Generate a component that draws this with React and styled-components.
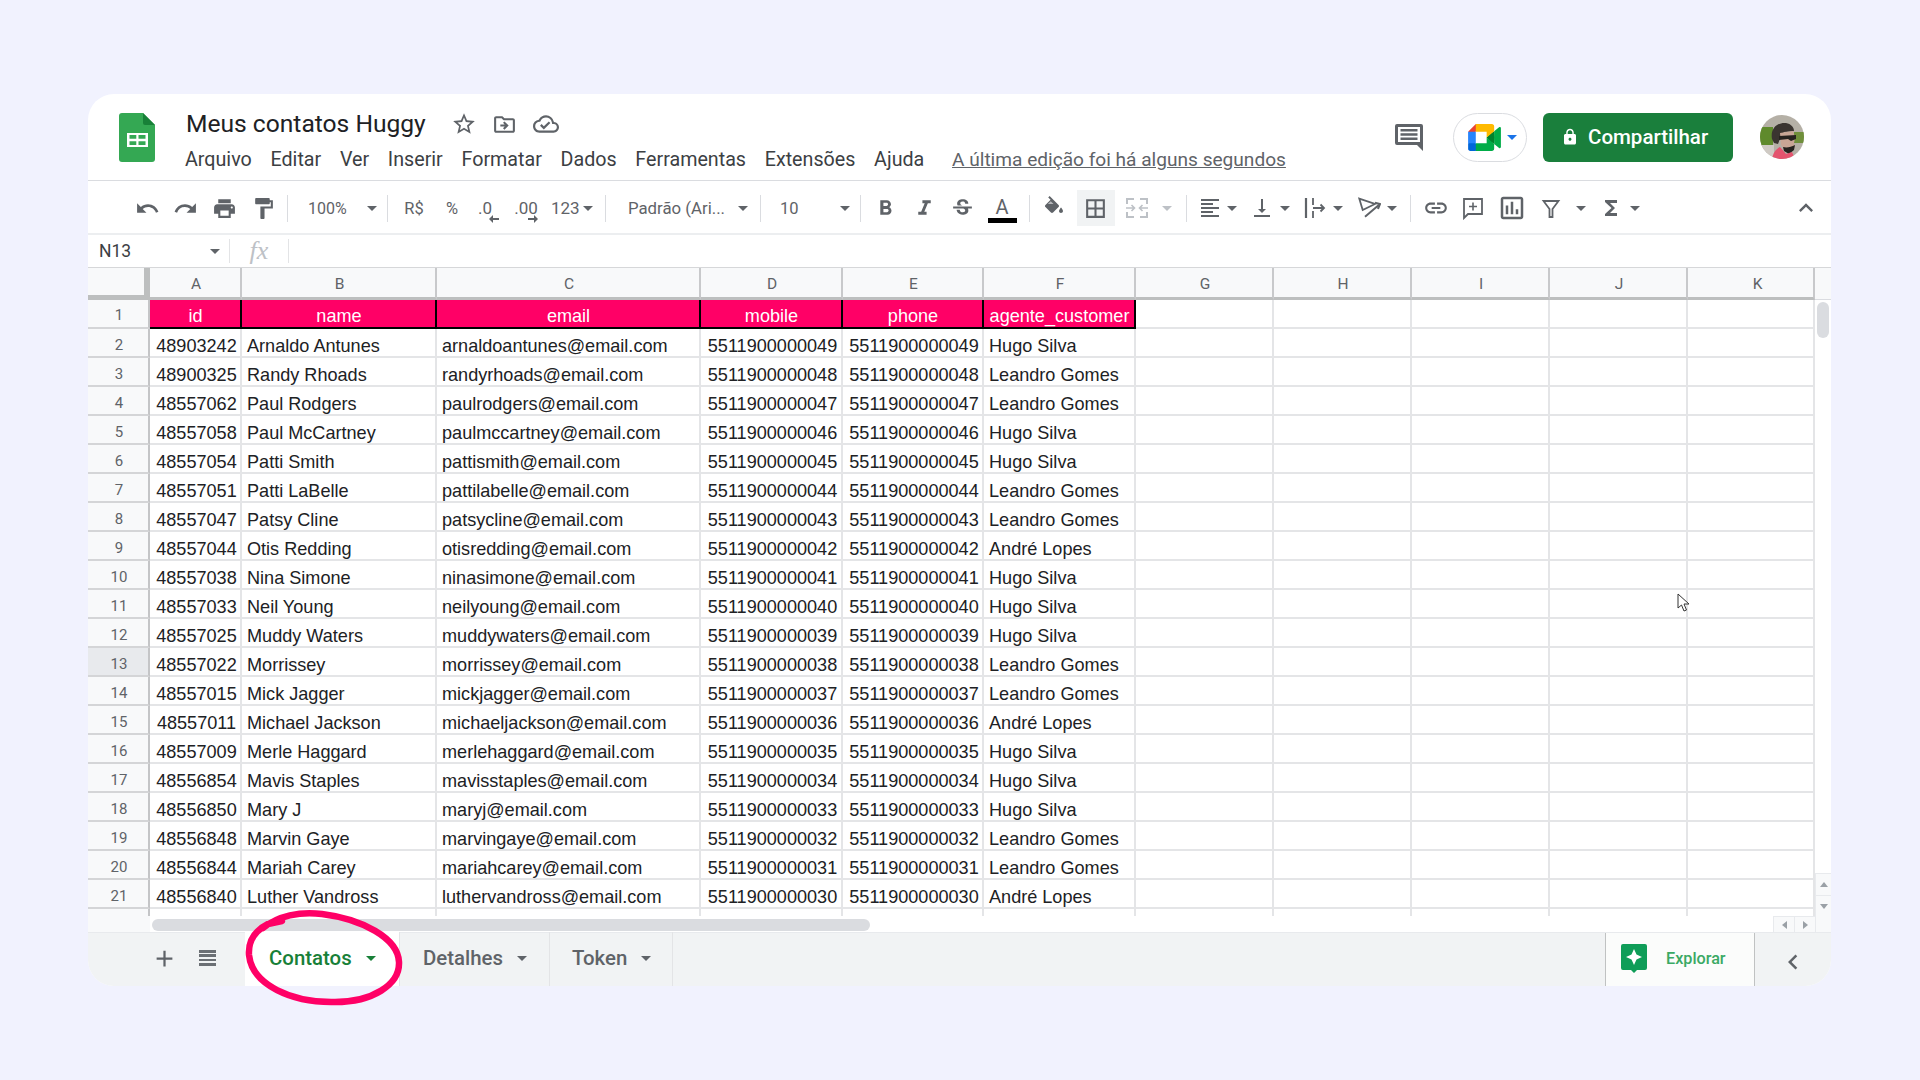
import React from 'react';
import styled, { createGlobalStyle } from 'styled-components';
import {
  MdUndo, MdRedo, MdPrint, MdFormatPaint, MdFormatBold, MdFormatItalic, MdStrikethroughS,
  MdBorderAll, MdFormatAlignLeft, MdVerticalAlignBottom, MdLink, MdFunctions,
  MdStarBorder, MdAdd, MdExpandLess, MdChevronLeft, MdLock,
  MdOutlineInsertChart, MdOutlineCloudDone, MdOutlineDriveFileMove,
} from 'react-icons/md';

const Global = createGlobalStyle`
  html, body { margin: 0; padding: 0; background: #f1f2fe; }
  body { font-family: Roboto, "Liberation Sans", sans-serif; overflow: hidden; }
  * { box-sizing: border-box; }
`;

const Page = styled.div`
  position: relative;
  width: 1920px;
  height: 1080px;
  padding: 94px 0 0 88px;
  background: #f1f2fe;
`;
const Card = styled.div`
  width: 1743px;
  height: 892px;
  background: #fff;
  border-radius: 26px;
  overflow: hidden;
  display: flex;
  flex-direction: column;
`;

/* ---------- header ---------- */
const Header = styled.header`
  height: 87px;
  flex: none;
  display: flex;
  align-items: center;
  padding: 0 27px 0 31px;
  border-bottom: 1px solid #dadce0;
`;
const Logo = styled.svg`
  width: 36px;
  height: 49px;
  flex: none;
`;
const TitleArea = styled.div`
  align-self: flex-start;
  margin: 15px 0 0 31px;
`;
const TitleRow = styled.div`
  height: 30px;
  display: flex;
  align-items: center;
`;
const Title = styled.div`
  font: 400 24.6px/30px Roboto, sans-serif;
  color: #202124;
  width: 257px;
`;
const TitleIcon = styled.span`
  width: ${p => p.$w || 41}px;
  display: flex;
  justify-content: center;
  color: #5f6368;
  font-size: ${p => p.$size || 24}px;
`;
const MenuRow = styled.nav`
  margin: 9px 0 0 -1px;
  height: 24px;
  display: flex;
  align-items: center;
  gap: 18.7px;
`;
const MenuItem = styled.span`
  font: 400 19.7px/24px Roboto, sans-serif;
  color: #3c4043;
`;
const LastEdit = styled.span`
  font: 400 19.1px/24px Roboto, sans-serif;
  color: #5f6368;
  text-decoration: underline;
  margin-left: 9px;
`;
const Right = styled.div`
  margin-left: auto;
  display: flex;
  align-items: center;
`;
const CommentGlyph = styled.svg`
  width: 28px;
  height: 27px;
  margin-right: 30px;
`;
const MeetPill = styled.div`
  width: 74px;
  height: 49px;
  border: 1px solid #dadce0;
  border-radius: 25px;
  display: flex;
  align-items: center;
  padding-left: 14px;
  margin-right: 16px;
`;
const MeetCaret = styled.span`
  margin-left: 6px;
  border-left: 5px solid transparent;
  border-right: 5px solid transparent;
  border-top: 5px solid #1a73e8;
`;
const ShareButton = styled.button`
  width: 190px;
  height: 49px;
  border: 0;
  border-radius: 6px;
  background: #1a7f3c;
  color: #fff;
  font: 500 20.5px Roboto, sans-serif;
  display: flex;
  align-items: center;
  padding: 0 0 0 18px;
  gap: 9px;
  margin-right: 27px;
`;
const Avatar = styled.svg`
  width: 44px;
  height: 44px;
  border-radius: 50%;
`;

/* ---------- toolbar ---------- */
const Toolbar = styled.div`
  height: 54px;
  flex: none;
  display: flex;
  align-items: center;
  padding: 2px 0 0 40px;
  border-bottom: 2px solid #eceef0;
`;
const Tool = styled.div`
  width: ${p => p.$w}px;
  height: 36px;
  flex: none;
  display: flex;
  align-items: center;
  justify-content: center;
  padding-right: ${p => p.$pr || 0}px;
  color: ${p => (p.$off ? '#bdc1c6' : '#5f6368')};
  font-size: ${p => p.$size || 25}px;
  background: ${p => (p.$on ? '#f1f3f4' : 'transparent')};
`;
const ToolGroup = styled.div`
  width: ${p => p.$w}px;
  height: 35px;
  flex: none;
  display: flex;
  align-items: center;
  padding-left: ${p => p.$pl}px;
  gap: ${p => p.$gap}px;
  color: ${p => (p.$off ? '#bdc1c6' : '#5f6368')};
  font-size: 24px;
`;
const ToolText = styled.span`
  font: 400 ${p => p.$size || 16.5}px Roboto, sans-serif;
  color: #5f6368;
  white-space: nowrap;
`;
const Caret = styled.span`
  flex: none;
  width: 0;
  height: 0;
  border-left: 5px solid transparent;
  border-right: 5px solid transparent;
  border-top: 5px solid ${p => p.$color || '#5f6368'};
  margin-left: ${p => p.$ml || 0}px;
`;
const Sep = styled.div`
  width: ${p => p.$w}px;
  height: 27px;
  flex: none;
  display: flex;
  justify-content: center;
  &::before { content: ''; width: 1px; background: #dadce0; }
`;
const Decimal = styled.span`
  position: relative;
  font: 400 17px/20px Roboto, sans-serif;
  color: #5f6368;
  display: inline-block;
`;
const DecimalArrow = styled.svg`
  position: absolute;
  left: ${p => p.$left}px;
  top: 16px;
  width: 12px;
  height: 10px;
`;
const TextColor = styled.span`
  width: 30px;
  display: flex;
  flex-direction: column;
  align-items: center;
  font: 400 20px/20px Roboto, sans-serif;
  color: #5f6368;
  margin-top: 4px;
`;
const ColorBar = styled.span`
  width: 29px;
  height: 5px;
  margin-top: 1px;
  background: #000;
`;
const Collapse = styled.span`
  margin-left: auto;
  margin-right: 11px;
  color: #5f6368;
  font-size: 28px;
  display: flex;
`;

/* ---------- formula bar ---------- */
const FormulaBar = styled.div`
  height: 32px;
  flex: none;
  display: flex;
  align-items: center;
`;
const NameBox = styled.div`
  width: 141px;
  padding: 0 9px 0 11px;
  display: flex;
  align-items: center;
  justify-content: space-between;
  font: 400 17.5px Roboto, sans-serif;
  color: #3c4043;
`;
const FxSep = styled.span`
  width: 1px;
  height: 24px;
  background: #e3e4e6;
`;
const Fx = styled.span`
  width: 58px;
  text-align: center;
  font: italic 400 26px "Liberation Serif", serif;
  color: #bdc1c6;
`;

/* ---------- grid ---------- */
const GridArea = styled.div`
  height: 649px;
  flex: none;
  display: flex;
  border-top: 1px solid #d6d7d9;
`;
const Grid = styled.div`
  width: 1727px;
  flex: none;
  overflow: hidden;
  display: grid;
  grid-template-columns: 62px 92px 195px 264px 142px 141px 152px 138px 138px 138px 138px 127px;
  grid-template-rows: 32px repeat(22, 29px);
`;
const Corner = styled.div`
  background: #f8f9fa;
  border-right: 6px solid #bdbfbf;
  border-bottom: 5px solid #bdbfbf;
`;
const ColHead = styled.div`
  background: #f8f9fa;
  border-right: 2px solid #c8c9cb;
  border-bottom: 3px solid #bdbfbf;
  padding-left: ${p => p.$pl || 2}px;
  font: 400 15.5px/33px Roboto, sans-serif;
  color: #5f6368;
  text-align: center;
`;
const RowHead = styled.div`
  background: ${p => (p.$active ? '#e8eaed' : '#f8f9fa')};
  border-right: 2px solid #c4c5c7;
  border-bottom: 2px solid #d4d5d7;
  padding-left: 2px;
  font: 400 15px/${p => p.$lh || 32}px Roboto, sans-serif;
  color: #5f6368;
  text-align: center;
`;
const Cell = styled.div`
  border-right: 2px solid #e4e5e7;
  border-bottom: 2px solid #e4e5e7;
  padding: 0 ${p => (p.$center ? 0 : 4)}px 0 ${p => (p.$center ? 3 : 5)}px;
  font: 400 18.1px/34px "Liberation Sans", Arial, sans-serif;
  color: #202124;
  text-align: ${p => (p.$center ? 'center' : 'left')};
  white-space: nowrap;
  overflow: hidden;
`;
const HeadCell = styled.div`
  background: #ff0066;
  border-right: 2px solid #000;
  border-bottom: 2px solid #000;
  padding-left: 1px;
  font: 400 18.1px/32px "Liberation Sans", Arial, sans-serif;
  color: #fff;
  text-align: center;
`;
const VScroll = styled.div`
  width: 16px;
  flex: none;
  display: flex;
  flex-direction: column;
`;
const VHead = styled.div`
  height: 32px;
  flex: none;
  background: #f8f9fa;
  border-bottom: 1px solid #dadce0;
`;
const VThumb = styled.div`
  width: 12px;
  height: 36px;
  flex: none;
  margin: 2px 0 0 2px;
  border-radius: 6px;
  background: #dadce0;
`;
const VGap = styled.div`
  flex: 1;
`;
const ScrollBtn = styled.div`
  flex: none;
  height: ${p => p.$h || 21}px;
  width: ${p => p.$w || 16}px;
  background: #f8f9fa;
  border-top: 1px solid #e8eaed;
  border-left: 1px solid #e8eaed;
  display: flex;
  align-items: center;
  justify-content: center;
`;
const TriUp = styled.span`
  border-left: 4px solid transparent;
  border-right: 4px solid transparent;
  border-bottom: 5px solid #9aa0a6;
`;
const TriDown = styled.span`
  border-left: 4px solid transparent;
  border-right: 4px solid transparent;
  border-top: 5px solid #9aa0a6;
`;
const TriLeft = styled.span`
  border-top: 4px solid transparent;
  border-bottom: 4px solid transparent;
  border-right: 5px solid #9aa0a6;
`;
const TriRight = styled.span`
  border-top: 4px solid transparent;
  border-bottom: 4px solid transparent;
  border-left: 5px solid #9aa0a6;
`;
const HScroll = styled.div`
  height: 16px;
  flex: none;
  display: flex;
  align-items: stretch;
`;
const HGutter = styled.div`
  width: 62px;
  flex: none;
  background: #f8f9fa;
`;
const HTrack = styled.div`
  flex: 1;
  padding: 3px 0 1px 2px;
`;
const HThumb = styled.div`
  width: 718px;
  height: 12px;
  border-radius: 6px;
  background: #dadce0;
`;
const HCorner = styled.div`
  width: 16px;
  flex: none;
  background: #f8f9fa;
  border-left: 1px solid #e8eaed;
`;

/* ---------- sheet tabs ---------- */
const TabBar = styled.div`
  flex: 1;
  display: flex;
  align-items: stretch;
  background: #f1f3f4;
  border-top: 1px solid #e8eaed;
  padding-left: 43px;
`;
const TabTool = styled.span`
  flex: none;
  width: ${p => p.$w}px;
  display: flex;
  align-items: center;
  justify-content: center;
  color: #5f6368;
  font-size: 27px;
  padding-bottom: 3px;
`;
const ListGlyph = styled.span`
  width: 17px;
  height: 16px;
  background: repeating-linear-gradient(to bottom, #6b6f74 0 2.500px, transparent 2.500px 4.400px);
`;
const SheetTab = styled.div`
  flex: none;
  width: ${p => p.$w}px;
  display: flex;
  align-items: center;
  padding: 0 0 2px ${p => p.$pl}px;
  gap: 14px;
  margin-top: -1px;
  background: ${p => (p.$active ? '#fff' : 'transparent')};
  border-right: 1px solid #e3e4e6;
  font: 500 20.4px Roboto, sans-serif;
  color: ${p => (p.$active ? '#188038' : '#5f6368')};
`;
const Spacer = styled.div`
  flex: 1;
`;
const Explore = styled.div`
  width: 150px;
  flex: none;
  background: #fbfcfb;
  border-left: 1px solid #c0c2c2;
  border-right: 1px solid #c0c2c2;
  display: flex;
  align-items: center;
  padding: 0 0 2px 15px;
  gap: 19px;
  font: 500 16.2px Roboto, sans-serif;
  color: #3aa964;
`;
const ExploreIcon = styled.svg`
  width: 26px;
  height: 29px;
`;
const SideToggle = styled.span`
  width: 76px;
  flex: none;
  display: flex;
  align-items: center;
  justify-content: center;
  color: #5f6368;
  font-size: 30px;
  padding-top: 5px;
`;

/* ---------- overlays ---------- */
const Circle = styled.svg`
  position: absolute;
  left: 240px;
  top: 900px;
  width: 175px;
  height: 115px;
  pointer-events: none;
`;
const Pointer = styled.svg`
  position: absolute;
  left: 1677px;
  top: 593px;
  width: 14px;
  height: 20px;
`;

const columns = ['A', 'B', 'C', 'D', 'E', 'F', 'G', 'H', 'I', 'J', 'K'];
const heads = ['id', 'name', 'email', 'mobile', 'phone', 'agente_customer'];
const H = 'Hugo Silva', L = 'Leandro Gomes', A = 'André Lopes';
const rows = [
  ['48903242', 'Arnaldo Antunes', 'arnaldoantunes@email.com', '5511900000049', '5511900000049', H],
  ['48900325', 'Randy Rhoads', 'randyrhoads@email.com', '5511900000048', '5511900000048', L],
  ['48557062', 'Paul Rodgers', 'paulrodgers@email.com', '5511900000047', '5511900000047', L],
  ['48557058', 'Paul McCartney', 'paulmccartney@email.com', '5511900000046', '5511900000046', H],
  ['48557054', 'Patti Smith', 'pattismith@email.com', '5511900000045', '5511900000045', H],
  ['48557051', 'Patti LaBelle', 'pattilabelle@email.com', '5511900000044', '5511900000044', L],
  ['48557047', 'Patsy Cline', 'patsycline@email.com', '5511900000043', '5511900000043', L],
  ['48557044', 'Otis Redding', 'otisredding@email.com', '5511900000042', '5511900000042', A],
  ['48557038', 'Nina Simone', 'ninasimone@email.com', '5511900000041', '5511900000041', H],
  ['48557033', 'Neil Young', 'neilyoung@email.com', '5511900000040', '5511900000040', H],
  ['48557025', 'Muddy Waters', 'muddywaters@email.com', '5511900000039', '5511900000039', H],
  ['48557022', 'Morrissey', 'morrissey@email.com', '5511900000038', '5511900000038', L],
  ['48557015', 'Mick Jagger', 'mickjagger@email.com', '5511900000037', '5511900000037', L],
  ['48557011', 'Michael Jackson', 'michaeljackson@email.com', '5511900000036', '5511900000036', A],
  ['48557009', 'Merle Haggard', 'merlehaggard@email.com', '5511900000035', '5511900000035', H],
  ['48556854', 'Mavis Staples', 'mavisstaples@email.com', '5511900000034', '5511900000034', H],
  ['48556850', 'Mary J', 'maryj@email.com', '5511900000033', '5511900000033', H],
  ['48556848', 'Marvin Gaye', 'marvingaye@email.com', '5511900000032', '5511900000032', L],
  ['48556844', 'Mariah Carey', 'mariahcarey@email.com', '5511900000031', '5511900000031', L],
  ['48556840', 'Luther Vandross', 'luthervandross@email.com', '5511900000030', '5511900000030', A],
  ['', '', '', '', '', ''],
];
const centered = [true, false, false, true, true, false];

const Glyph = ({ children }) => (
  <svg width="24" height="24" viewBox="0 0 24 24" fill="none" stroke="currentColor" strokeWidth="2">{children}</svg>
);

export default function App() {
  return (
    <Page>
      <Global />
      <Card>
        <Header>
          <Logo viewBox="0 0 36 49">
            <path fill="#34a853" d="M3 0h21l12 12v34a3 3 0 0 1-3 3H3a3 3 0 0 1-3-3V3a3 3 0 0 1 3-3z" />
            <path fill="#188038" d="M24 0l12 12H26a2 2 0 0 1-2-2z" />
            <path fill="#fff" fillRule="evenodd" d="M8 20h21v14H8zM10.500 22v3.800h6.800V22zm9 0v3.800h7V22zm-9 6.200V32h6.800v-3.800zm9 0V32h7v-3.800z" />
          </Logo>
          <TitleArea>
            <TitleRow>
              <Title>Meus contatos Huggy</Title>
              <TitleIcon $size={26}><MdStarBorder /></TitleIcon>
              <TitleIcon $size={25}><MdOutlineDriveFileMove /></TitleIcon>
              <TitleIcon $size={26}><MdOutlineCloudDone /></TitleIcon>
            </TitleRow>
            <MenuRow>
              {['Arquivo', 'Editar', 'Ver', 'Inserir', 'Formatar', 'Dados', 'Ferramentas', 'Extensões', 'Ajuda'].map(m => (
                <MenuItem key={m}>{m}</MenuItem>
              ))}
              <LastEdit>A última edição foi há alguns segundos</LastEdit>
            </MenuRow>
          </TitleArea>
          <Right>
            <CommentGlyph viewBox="0 0 28 27">
              <path fill="#5f6368" fillRule="evenodd" d="M2 0h24a2 2 0 0 1 2 2v25l-6-6H2a2 2 0 0 1-2-2V2a2 2 0 0 1 2-2zm1 3v15h22V3z" />
              <path fill="#5f6368" d="M5.500 5h17v2.500h-17zM5.500 9.300h17v2.500h-17zM5.500 13.500h17V16h-17z" />
            </CommentGlyph>
            <MeetPill>
              <svg width="33" height="27" viewBox="0 0 87.500 72">
                <path fill="#00832d" d="M49.500 36l8.530 9.750 11.470 7.330 2-17.020-2-16.640-11.690 6.440z" />
                <path fill="#0066da" d="M0 51.500V66c0 3.315 2.685 6 6 6h14.500l3-10.960-3-9.540-9.950-3z" />
                <path fill="#e94235" d="M20.500 0L0 20.500l10.550 3 9.950-3 2.950-9.410z" />
                <path fill="#2684fc" d="M20.500 20.500H0v31h20.500z" />
                <path fill="#00ac47" d="M82.600 8.680L69.500 19.420v33.660l13.160 10.790c1.970 1.540 4.850.135 4.850-2.370V11c0-2.535-2.945-3.925-4.910-2.320zM49.500 36v15.500h-29V72h43c3.315 0 6-2.685 6-6V53.080z" />
                <path fill="#ffba00" d="M63.500 0h-43v20.500h29V36l20-16.570V6c0-3.315-2.685-6-6-6z" />
              </svg>
              <MeetCaret />
            </MeetPill>
            <ShareButton><MdLock size={18} />Compartilhar</ShareButton>
            <Avatar viewBox="0 0 44 44">
              <rect width="44" height="44" fill="#b5b0a6" />
              <rect x="0" y="12" width="13" height="18" fill="#5f8a2c" />
              <rect x="34" y="17" width="10" height="11" fill="#6f8f3a" />
              <rect x="0" y="30" width="14" height="14" fill="#cfcac4" />
              <path fill="#3a3430" d="M12 24c-2-11 6-17 14-16 5 1 8 4 8 8l-10 1-3 4-3 8-4-1z" />
              <path fill="#c8a595" d="M20 18l13-2c2 5 2 9 1 12l1 5-9 3-5-6z" />
              <path fill="#26221f" d="M19 21l17-1v4l-5 2-3-2-9 1zM23 32c4 1 8 0 12-2l-1 5-5 4-5-3z" />
              <path fill="#e4536e" d="M12 44c1-6 4-10 8-12l6 7 6-2 3 7z" />
            </Avatar>
          </Right>
        </Header>

        <Toolbar>
          <Tool $w={38}><MdUndo /></Tool>
          <Tool $w={39}><MdRedo /></Tool>
          <Tool $w={38}><MdPrint /></Tool>
          <Tool $w={40}><MdFormatPaint /></Tool>
          <Sep $w={9} />
          <ToolGroup $w={90} $pl={16} $gap={20}><ToolText $size={16}>100%</ToolText><Caret /></ToolGroup>
          <Sep $w={11} />
          <Tool $w={42}><ToolText>R$</ToolText></Tool>
          <Tool $w={34}><ToolText>%</ToolText></Tool>
          <Tool $w={38} $pr={6}>
            <Decimal>.0<DecimalArrow $left={10} viewBox="0 0 12 10"><path fill="#5f6368" d="M5 1L1 5l4 4V6h6V4H5z" /></DecimalArrow></Decimal>
          </Tool>
          <Tool $w={42} $pr={4}>
            <Decimal>.00<DecimalArrow $left={13} viewBox="0 0 12 10"><path fill="#5f6368" d="M7 1l4 4-4 4V6H1V4h6z" /></DecimalArrow></Decimal>
          </Tool>
          <ToolGroup $w={49} $pl={2} $gap={3}><ToolText $size={17}>123</ToolText><Caret /></ToolGroup>
          <Sep $w={14} />
          <ToolGroup $w={140} $pl={16} $gap={13}><ToolText $size={16.8}>Padrão (Ari...</ToolText><Caret /></ToolGroup>
          <Sep $w={16} />
          <ToolGroup $w={86} $pl={12} $gap={41}><ToolText>10</ToolText><Caret /></ToolGroup>
          <Sep $w={12} />
          <Tool $w={38}><MdFormatBold /></Tool>
          <Tool $w={40}><MdFormatItalic /></Tool>
          <Tool $w={36}><MdStrikethroughS /></Tool>
          <Tool $w={44}><TextColor>A<ColorBar /></TextColor></Tool>
          <Sep $w={10} />
          <Tool $w={43} $pr={4}>
            <svg width="24" height="24" viewBox="0 0 24 24">
              <path fill="currentColor" d="M16.560 8.940L7.620 0 6.210 1.410l2.380 2.380-5.150 5.150c-.59.59-.59 1.540 0 2.120l5.500 5.500c.59.59 1.530.59 2.120 0l5.500-5.500c.59-.58.59-1.530 0-2.120zM19 11.500s-2 2.170-2 3.500c0 1.100.9 2 2 2s2-.9 2-2c0-1.330-2-3.500-2-3.500z" />
              <path fill="#fff" opacity=".55" d="M8.700 5.200L5.800 8.100h5.800z" />
            </svg>
          </Tool>
          <Tool $w={38} $on $pr={2}><MdBorderAll /></Tool>
          <ToolGroup $w={63} $pl={10} $gap={13} $off>
            <Glyph>
              <path d="M2 8V3h7M15 3h7v5M2 16v5h7M15 21h7v-5" />
              <path strokeWidth="1.600" d="M1 12h8M6.500 9L9.500 12l-3 3M23 12h-8M17.500 9L14.500 12l3 3" />
            </Glyph>
            <Caret $color="#bdc1c6" />
          </ToolGroup>
          <Sep $w={16} />
          <ToolGroup $w={49} $pl={4} $gap={5}><MdFormatAlignLeft /><Caret /></ToolGroup>
          <ToolGroup $w={53} $pl={7} $gap={6}><MdVerticalAlignBottom /><Caret /></ToolGroup>
          <ToolGroup $w={53} $pl={7} $gap={6}>
            <Glyph>
              <path d="M3 2v20" strokeWidth="2.200" />
              <path strokeWidth="1.800" d="M10 2v7M10 15v7M10 12h11M17.500 8.500L21 12l-3.500 3.500" />
            </Glyph>
            <Caret />
          </ToolGroup>
          <ToolGroup $w={53} $pl={8} $gap={6}>
            <Glyph>
              <path strokeWidth="1.800" d="M2.300 2.700L18 8 5.700 14z" />
              <path strokeWidth="2" d="M23 8L8 20.700M18 6.700L23 8l-2 5" />
            </Glyph>
            <Caret />
          </ToolGroup>
          <Sep $w={16} />
          <Tool $w={36} $size={26}><MdLink /></Tool>
          <Tool $w={38}>
            <Glyph>
              <path d="M3 3h18v15H7l-4 4z" strokeWidth="1.800" />
              <path d="M12 6.500v8M8 10.500h8" strokeWidth="1.600" />
            </Glyph>
          </Tool>
          <Tool $w={40} $size={30}><MdOutlineInsertChart /></Tool>
          <ToolGroup $w={58} $pl={7} $gap={13}>
            <Glyph><path strokeWidth="1.800" d="M4.500 5h15l-6 8v8h-3v-8z" /></Glyph>
            <Caret />
          </ToolGroup>
          <ToolGroup $w={55} $pl={9} $gap={7}><MdFunctions /><Caret /></ToolGroup>
          <Collapse><MdExpandLess /></Collapse>
        </Toolbar>

        <FormulaBar>
          <NameBox>N13<Caret /></NameBox>
          <FxSep />
          <Fx>fx</Fx>
          <FxSep />
        </FormulaBar>

        <GridArea>
          <Grid>
            <Corner />
            {columns.map(c => <ColHead key={c} $pl={c === 'K' ? 14 : 2}>{c}</ColHead>)}
            <RowHead $lh={30}>1</RowHead>
            {heads.map(h => <HeadCell key={h}>{h}</HeadCell>)}
            {columns.slice(6).map(c => <Cell key={c} />)}
            {rows.map((r, i) => (
              <React.Fragment key={i}>
                <RowHead $active={i + 2 === 13}>{i + 2 === 22 ? '' : i + 2}</RowHead>
                {r.map((v, j) => <Cell key={j} $center={centered[j]}>{v}</Cell>)}
                {columns.slice(6).map(c => <Cell key={c} />)}
              </React.Fragment>
            ))}
          </Grid>
          <VScroll>
            <VHead />
            <VThumb />
            <VGap />
            <ScrollBtn $h={22}><TriUp /></ScrollBtn>
            <ScrollBtn $h={21}><TriDown /></ScrollBtn>
          </VScroll>
        </GridArea>
        <HScroll>
          <HGutter />
          <HTrack><HThumb /></HTrack>
          <ScrollBtn $w={21} $h={16}><TriLeft /></ScrollBtn>
          <ScrollBtn $w={21} $h={16}><TriRight /></ScrollBtn>
          <HCorner />
        </HScroll>

        <TabBar>
          <TabTool $w={66}><MdAdd /></TabTool>
          <TabTool $w={20}><ListGlyph /></TabTool>
          <TabTool $w={28} />
          <SheetTab $active $w={155} $pl={24}>Contatos<Caret $color="#188038" /></SheetTab>
          <SheetTab $w={150} $pl={23}>Detalhes<Caret /></SheetTab>
          <SheetTab $w={123} $pl={22}>Token<Caret /></SheetTab>
          <Spacer />
          <Explore>
            <ExploreIcon viewBox="0 0 26 29">
              <path fill="#0f9d58" d="M2 0h22a2 2 0 0 1 2 2v22a2 2 0 0 1-2 2h-8l-3 3-3-3H2a2 2 0 0 1-2-2V2a2 2 0 0 1 2-2z" />
              <path fill="#fff" d="M13 5l2.500 5.500L21 13l-5.500 2.500L13 21l-2.500-5.500L5 13l5.500-2.500z" />
            </ExploreIcon>
            Explorar
          </Explore>
          <SideToggle><MdChevronLeft /></SideToggle>
        </TabBar>
      </Card>

      <Circle viewBox="240 900 175 115" fill="none" stroke="#ff0066" strokeWidth="6.500" strokeLinecap="round">
        <path d="M263 928C278 916 300 911 322 914C362 919 398 938 399 962C400 985 372 1002 335 1002C292 1003 252 985 249 955C248 940 256 930 268 924L282 921" />
      </Circle>
      <Pointer viewBox="0 0 14 20">
        <path fill="#fff" stroke="#333" strokeWidth="1" d="M1 1v14l3.500-3 2.500 6 2.500-1-2.500-6h5z" />
      </Pointer>
    </Page>
  );
}
